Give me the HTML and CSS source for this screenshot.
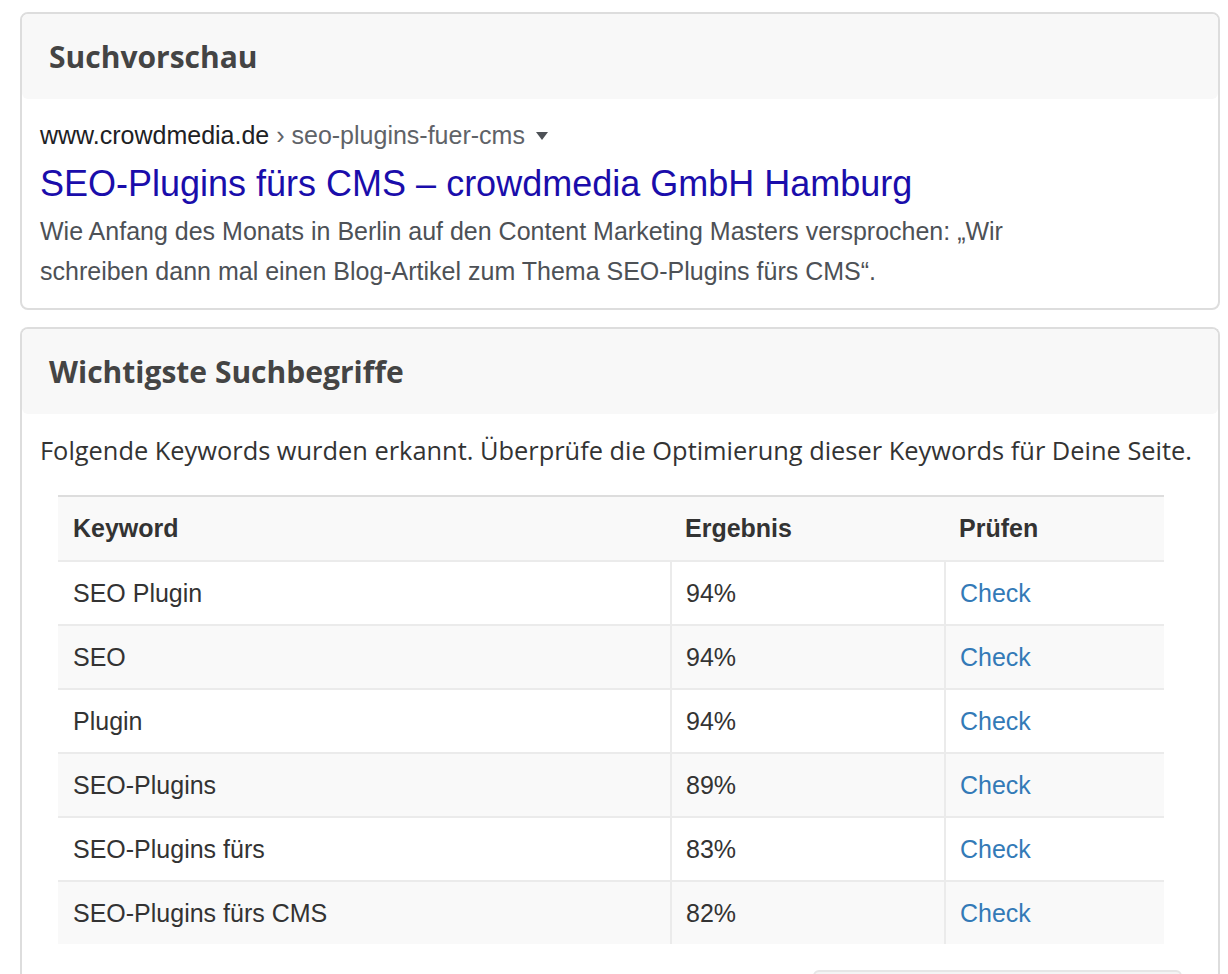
FILE: index.html
```html
<!DOCTYPE html>
<html lang="de">
<head>
<meta charset="utf-8">
<title>SEO Check</title>
<link rel="stylesheet" href="styles.css">
</head>
<body>
<div class="page">
  <section class="card">
    <div class="card-header"><h2 class="card-title">Suchvorschau</h2></div>
    <div class="card-body preview">
      <div class="serp-url"><span class="serp-domain">www.crowdmedia.de</span><span class="serp-path"> › seo-plugins-fuer-cms</span><span class="serp-arrow"></span></div>
      <div class="serp-title">SEO-Plugins fürs CMS – crowdmedia GmbH Hamburg</div>
      <div class="serp-desc">Wie Anfang des Monats in Berlin auf den Content Marketing Masters versprochen: „Wir schreiben dann mal einen Blog-Artikel zum Thema SEO-Plugins fürs CMS“.</div>
    </div>
  </section>

  <section class="card card-open">
    <div class="card-header"><h2 class="card-title">Wichtigste Suchbegriffe</h2></div>
    <div class="card-body">
      <p class="intro">Folgende Keywords wurden erkannt. Überprüfe die Optimierung dieser Keywords für Deine Seite.</p>
      <table class="kw-table">
        <colgroup>
          <col class="col-kw">
          <col class="col-res">
          <col class="col-chk">
        </colgroup>
        <thead>
          <tr><th>Keyword</th><th>Ergebnis</th><th>Prüfen</th></tr>
        </thead>
        <tbody>
          <tr><td>SEO Plugin</td><td>94%</td><td><a href="#">Check</a></td></tr>
          <tr><td>SEO</td><td>94%</td><td><a href="#">Check</a></td></tr>
          <tr><td>Plugin</td><td>94%</td><td><a href="#">Check</a></td></tr>
          <tr><td>SEO-Plugins</td><td>89%</td><td><a href="#">Check</a></td></tr>
          <tr><td>SEO-Plugins fürs</td><td>83%</td><td><a href="#">Check</a></td></tr>
          <tr><td>SEO-Plugins fürs CMS</td><td>82%</td><td><a href="#">Check</a></td></tr>
        </tbody>
      </table>
      <div class="actions"><div class="more-box"></div></div>
    </div>
  </section>
</div>
</body>
</html>
```

FILE: styles.css
```css
html, body {
  margin: 0;
  padding: 0;
  background: #ffffff;
}
body {
  font-family: "Liberation Sans", Arial, sans-serif;
  color: #333333;
}
.page {
  padding: 12px 8px 0 20px;
  display: flex;
  flex-direction: column;
  gap: 17px;
}
.card {
  border: 2px solid #dddddd;
  border-radius: 8px;
  background: #ffffff;
}
.card-open {
  border-bottom: none;
  border-bottom-left-radius: 0;
  border-bottom-right-radius: 0;
}
.card-header {
  background: #f8f8f8;
  border-radius: 6px;
  padding: 18px 27px;
}
.card-title {
  margin: 0;
  font-family: "Open Sans", "Noto Sans", sans-serif;
  font-weight: 700;
  font-size: 30px;
  line-height: 49px;
  color: #444444;
}
.card-body {
  padding: 18px 18px 17px 18px;
}
.serp-url {
  font-size: 25px;
  line-height: 36px;
  display: flex;
  align-items: center;
  white-space: pre;
}
.serp-domain { color: #202124; }
.serp-path { color: #5f6368; }
.serp-arrow {
  width: 0;
  height: 0;
  margin-left: 11px;
  margin-top: 2px;
  border-left: 6px solid transparent;
  border-right: 6px solid transparent;
  border-top: 8px solid #4d5156;
}
.serp-title {
  margin-top: 5px;
  font-size: 36px;
  line-height: 52px;
  color: #1a0dab;
}
.serp-desc {
  margin-top: 2px;
  max-width: 1040px;
  font-size: 25px;
  line-height: 39.5px;
  color: #4d5156;
}
.intro {
  margin: 0 0 27px 0;
  font-family: "Open Sans", "Noto Sans", sans-serif;
  font-size: 25.4px;
  line-height: 36px;
  color: #333333;
}
.kw-table {
  margin-left: 18px;
  width: 1106px;
  border-collapse: collapse;
  border-top: 2px solid #dddddd;
  font-size: 25px;
}
.col-kw { width: 613px; }
.col-res { width: 274px; }
.col-chk { width: 219px; }
.kw-table th {
  text-align: left;
  font-weight: 700;
  padding: 14px 14px 14px 14px;
  line-height: 35px;
  background: #f9f9f9;
  color: #333333;
}
.kw-table th:first-child,
.kw-table td:first-child {
  padding-left: 15px;
}
.kw-table td {
  padding: 14px 14px;
  line-height: 34px;
  border-top: 2px solid #ebebeb;
  color: #333333;
}
.kw-table td + td {
  border-left: 2px solid #ebebeb;
}
.kw-table tbody tr:nth-child(even) td {
  background: #f9f9f9;
}
.kw-table a {
  color: #337ab7;
  text-decoration: none;
}
.actions {
  display: flex;
  justify-content: flex-end;
  margin-top: 26px;
  padding-right: 18px;
}
.more-box {
  width: 365px;
  height: 44px;
  background: #f4f4f4;
  border: 2px solid #e6e6e6;
  border-radius: 6px;
}
```
